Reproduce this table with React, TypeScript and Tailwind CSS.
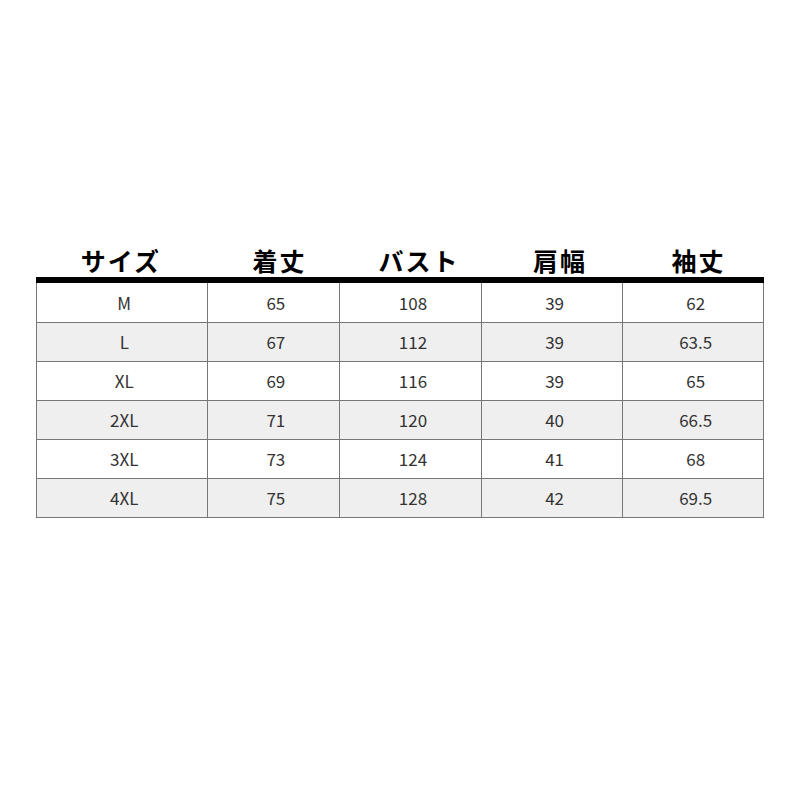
import React from "react";

const headers = ["サイズ", "着丈", "バスト", "肩幅", "袖丈"];
const rows = [
  ["M", "65", "108", "39", "62"],
  ["L", "67", "112", "39", "63.5"],
  ["XL", "69", "116", "39", "65"],
  ["2XL", "71", "120", "40", "66.5"],
  ["3XL", "73", "124", "41", "68"],
  ["4XL", "75", "128", "42", "69.5"],
];
const widths = ["w-[170px]", "w-[133px]", "w-[142px]", "w-[142px]", "w-[141px]"];
const headPad = ["pl-0", "pl-[14px]", "pl-[18px]", "pl-[16px]", "pl-[10px]"];

export default function App() {
  return (
    <div className="w-[800px] h-[800px] bg-white pt-[244px] px-[36px]" style={{ fontFamily: '"Noto Sans CJK JP", "Noto Sans", sans-serif' }}>
      <div className="w-[728px]">
        <div className="flex h-[33px] items-center">
          {headers.map((h, i) => (
            <div key={i} className={`${widths[i]} ${headPad[i]} text-center text-[25px] font-bold leading-none text-black tracking-[2px]`}>
              {h}
            </div>
          ))}
        </div>
        <div className="h-[6px] bg-black" />
        <div className="border-x border-b border-[#777]">
          {rows.map((r, ri) => (
            <div key={ri} className={`flex h-[39px] ${ri > 0 ? "border-t border-[#777]" : ""} ${ri % 2 === 1 ? "bg-[#efefef]" : "bg-white"}`}>
              {r.map((c, ci) => (
                <div key={ci} className={`${widths[ci]} ${ci > 0 ? "border-l border-[#777]" : ""} flex items-center justify-center pl-[5px] text-[17px] text-[#333]`}>
                  {c}
                </div>
              ))}
            </div>
          ))}
        </div>
      </div>
    </div>
  );
}
